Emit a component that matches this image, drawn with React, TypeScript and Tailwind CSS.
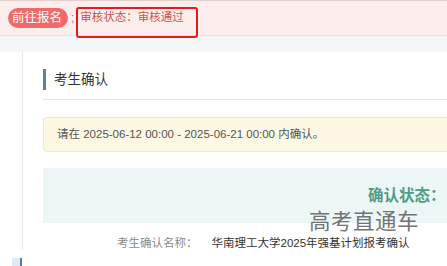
import React from "react";

export default function App() {
  return (
    <div
      className="relative w-[447px] h-[266px] overflow-hidden bg-white"
      style={{ fontFamily: '"Liberation Sans", "Noto Sans CJK SC", sans-serif' }}
    >
      {/* top banner */}
      <div className="h-[36px] border-t border-t-[#e6cfcf] border-b border-b-[#f6dcdc] bg-[#fdeeee] flex items-center">
        <div className="ml-[8px] h-[20px] w-[60px] rounded-full bg-[#f06a6a] flex items-center pl-[4px] text-white text-[12.5px] leading-none">
          前往报名
        </div>
        <span className="ml-[3px] text-[12px] text-[#8a8a8a] leading-none">;</span>
        <span className="ml-[6px] text-[11.5px] text-[#d2504d] leading-none">审核状态：审核通过</span>
      </div>
      {/* annotation box */}
      <div className="absolute left-[76px] top-[7px] w-[122px] h-[31px] border-2 border-[#e8191b] rounded-[3px]" />

      {/* gray band */}
      <div className="h-[16px] bg-[#f5f6f8]" />

      {/* body */}
      <div className="flex">
        <div className="w-[22px] shrink-0 relative">
          <div className="absolute left-[12px] top-[206px] w-[8px] h-[10px] bg-[#dfeaf6]" />
          <div className="absolute left-[20px] top-[206px] w-[2px] h-[10px] bg-[#5a78a8]" />
        </div>
        <div className="w-[500px] shrink-0 border-l border-l-[#e4e7ec] pl-[20px]">
          <div className="flex items-center pt-[17px] pb-[9px] border-b border-b-[#dfe3ea]">
            <div className="w-[3px] h-[21px] bg-[#5f7fa3]" />
            <span className="ml-[8px] text-[13.5px] text-[#333] leading-none">考生确认</span>
          </div>
          <div className="mt-[17px] h-[35px] rounded-[4px] border border-[#f7e6c4] bg-[#fcf8e3] flex items-center pl-[13px] text-[11.5px] text-[#555] leading-none">
            请在 2025-06-12 00:00 - 2025-06-21 00:00 内确认。
          </div>
          <div className="mt-[16px] h-[55px] bg-[#edf6f6] flex items-center pl-[325px] text-[15.5px] font-bold text-[#4f9d86] leading-none">
            确认状态：
          </div>
          <div className="mt-[15px] flex items-center text-[11.5px] leading-none">
            <span className="ml-[74px] text-[#8a8a8a]">考生确认名称：</span>
            <span className="ml-[14px] text-[#333]">华南理工大学2025年强基计划报考确认</span>
          </div>
        </div>
      </div>

      {/* watermark */}
      <div className="absolute left-[309px] top-[212px] text-[21.5px] leading-none text-[#666] opacity-90 tracking-[0.5px]">
        高考直通车
      </div>
    </div>
  );
}
